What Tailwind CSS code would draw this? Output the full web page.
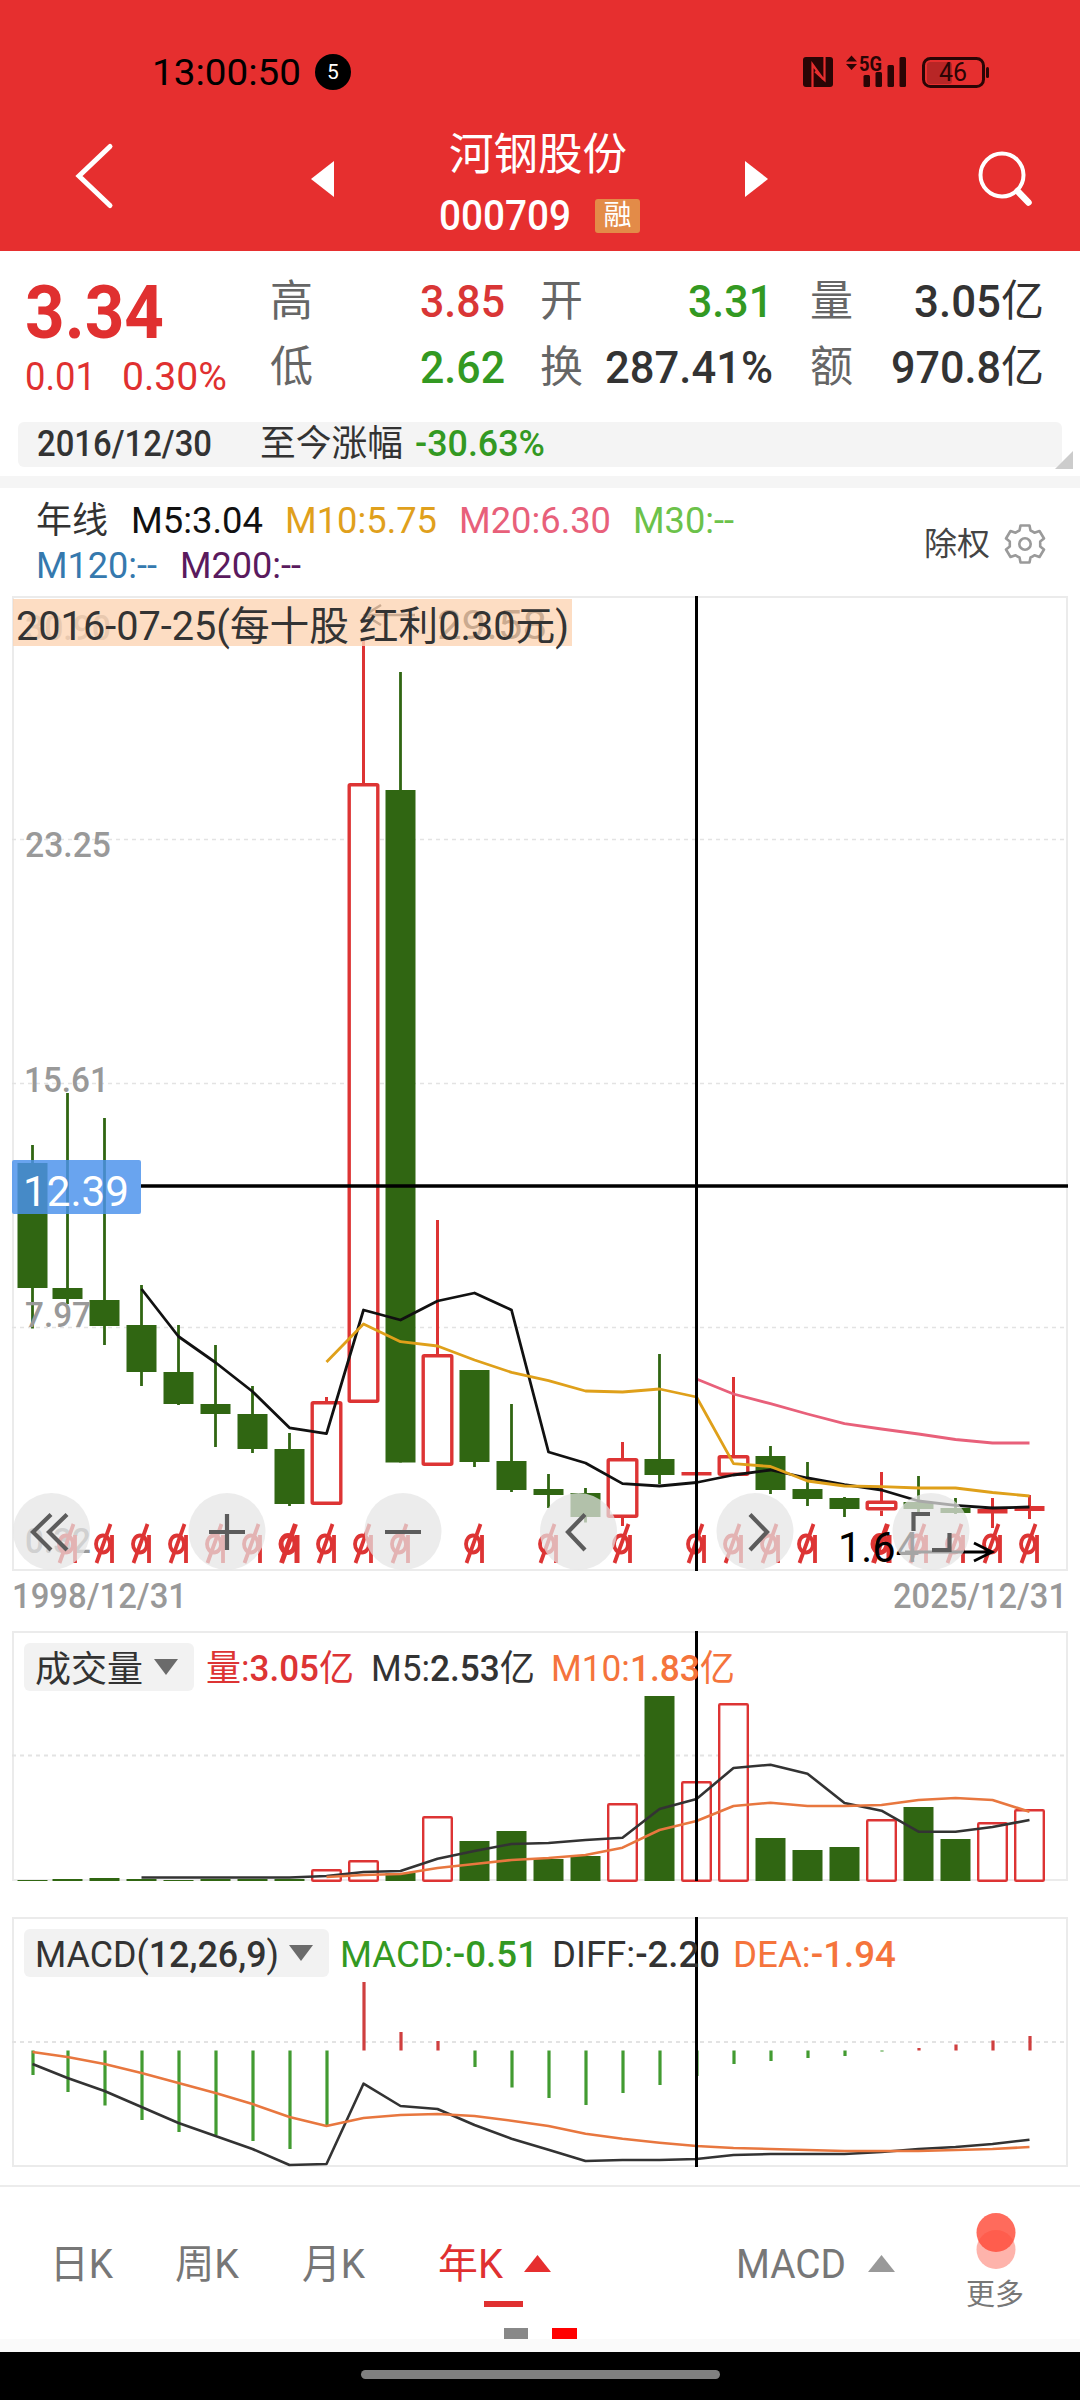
<!DOCTYPE html>
<html lang="zh-CN">
<head>
<meta charset="utf-8">
<title>河钢股份 000709</title>
<script src="https://cdn.jsdelivr.net/npm/@tailwindcss/browser@4"></script>
</head>
<body class="bg-white">
<div class="w-[1080px] h-[2400px] flex flex-col overflow-hidden bg-white font-[Roboto,'Noto_Sans_CJK_SC',sans-serif] text-[#333] whitespace-nowrap">

  <header class="h-[251px] shrink-0 bg-[#e62f2f] flex flex-col">
    <div class="mt-[54px] h-9 flex items-center text-black">
      <span class="ml-[152px] mt-[2px] text-[37px] leading-9" data-w="149">13:00:50</span>
      <span class="ml-[14px] size-9 rounded-full bg-black text-white text-[21px] leading-9 text-center">5</span>
      <svg class="ml-[439px] shrink-0" width="220" height="36" viewBox="790 54 220 36">
        <g fill="#2a0505">
          <rect x="803" y="57" width="30" height="30" rx="3"/>
          <path d="M812.500 87V64.500L823 79M824.500 57V80L815 71.500" fill="none" stroke="#e62f2f" stroke-width="2.200"/>
          <path d="M846 61.500l5.500-6 5.500 6zM846 64l5.500 6 5.500-6z"/>
          <rect x="863.500" y="75" width="6.500" height="12" rx="1.500"/>
          <rect x="875.500" y="72" width="6.500" height="15" rx="1.500"/>
          <rect x="887.500" y="65" width="6.500" height="22" rx="1.500"/>
          <rect x="899.500" y="57" width="6.500" height="30" rx="1.500"/>
          <text x="859" y="70.500" font-size="20" font-weight="700" textLength="23" lengthAdjust="spacingAndGlyphs">5G</text>
          <rect x="927" y="62" width="25" height="22" rx="3" fill="#b82626"/>
          <rect x="923.500" y="58.500" width="60" height="28" rx="7" fill="none" stroke="#2a0505" stroke-width="3"/>
          <rect x="986" y="67" width="3" height="11" rx="1.500"/>
          <text x="939" y="81" font-size="25" textLength="28" lengthAdjust="spacingAndGlyphs">46</text>
        </g>
      </svg>
    </div>
    <div class="flex-1 flex items-start">
      <svg class="ml-[74px] mt-[50px] shrink-0" width="42" height="72" viewBox="74 140 42 72" fill="none" stroke="#fff" stroke-width="5" stroke-linecap="round"><path d="M110 146.500L79 176l31 29.500"/></svg>
      <svg class="ml-[195px] mt-[71px] shrink-0" width="23" height="36" viewBox="0 0 23 36" fill="#fff"><path d="M23 0v36L0 18z"/></svg>
      <div class="ml-[105px] w-[204px] mt-[40px] text-white flex flex-col">
        <span class="ml-[10px] text-[44px] leading-[50px]" data-w="178">河钢股份</span>
        <div class="mt-[18px] h-9 flex items-center">
          <span class="text-[42px] leading-9 font-medium" data-w="132">000709</span>
          <span class="ml-[24px] w-[45px] h-[34px] rounded-[3px] bg-[#e38b48] text-[28px] leading-[33px] text-center">融</span>
        </div>
      </div>
      <svg class="ml-[102px] mt-[71px] shrink-0" width="23" height="36" viewBox="0 0 23 36" fill="#fff"><path d="M0 0v36l23-18z"/></svg>
      <svg class="ml-[208px] mt-[58px] shrink-0" width="60" height="62" viewBox="976 148 60 62" fill="none" stroke="#fff"><circle cx="1002" cy="175" r="21.500" stroke-width="4"/><path d="M1017.500 191l11 11.500" stroke-width="6.500" stroke-linecap="round"/></svg>
    </div>
  </header>

  <section class="h-[171px] shrink-0 flex text-[45px] leading-[66px] font-medium">
    <div class="w-[201px] ml-[25px] text-[#e03030] flex flex-col">
      <span class="mt-[25px] leading-[70px] text-[75px] font-bold" data-w="139">3.34</span>
      <div class="flex mt-[11px] leading-[40px] text-[39px] font-normal">
        <span data-w="71">0.01</span>
        <span class="ml-[26px]" data-w="105">0.30%</span>
      </div>
    </div>
    <div class="mt-[17px] ml-[44px] w-[235px] grid grid-rows-2 h-[132px]">
      <div class="flex justify-between"><span class="font-normal text-[43px] text-[#666]">高</span><span class="text-[#d93636]" data-w="85">3.85</span></div>
      <div class="flex justify-between"><span class="font-normal text-[43px] text-[#666]">低</span><span class="text-[#339922]" data-w="85">2.62</span></div>
    </div>
    <div class="mt-[17px] ml-[35px] w-[233px] grid grid-rows-2 h-[132px]">
      <div class="flex justify-between"><span class="font-normal text-[43px] text-[#666]">开</span><span class="text-[#339922]" data-w="85">3.31</span></div>
      <div class="flex justify-between"><span class="font-normal text-[43px] text-[#666]">换</span><span data-w="168">287.41%</span></div>
    </div>
    <div class="mt-[17px] ml-[37px] w-[234px] grid grid-rows-2 h-[132px]">
      <div class="flex justify-between"><span class="font-normal text-[43px] text-[#666]">量</span><div class="flex"><span data-w="87">3.05</span><span class="text-[43px] font-normal">亿</span></div></div>
      <div class="flex justify-between"><span class="font-normal text-[43px] text-[#666]">额</span><div class="flex"><span data-w="110">970.8</span><span class="text-[43px] font-normal">亿</span></div></div>
    </div>
  </section>

  <section class="h-[54px] shrink-0 pl-[18px] flex">
    <div class="w-[1044px] shrink-0 h-[45px] rounded-md bg-[#f4f4f4] flex items-center pl-[19px] text-[36px] leading-[44px] font-medium">
      <span data-w="175">2016/12/30</span>
      <span class="ml-[48px] font-normal" data-w="143">至今涨幅</span>
      <span class="ml-[12px] text-[#339922]" data-w="130">-30.63%</span>
    </div>
    <svg class="mt-[29px] -ml-[7px] shrink-0" width="18" height="18" viewBox="0 0 18 18"><path d="M18 0v18H0z" fill="#ccc"/></svg>
  </section>
  <div class="h-3 shrink-0 bg-[#f5f5f5]"></div>

  <section class="h-[102px] shrink-0 flex text-[36px] leading-[45px]">
    <div class="ml-[36px] mt-[11px] w-[890px]">
      <div class="flex">
        <span data-w="72">年线</span>
        <span class="ml-[23px] text-[#111]" data-w="132">M5:3.04</span>
        <span class="ml-[22px] text-[#e0a01c]" data-w="152">M10:5.75</span>
        <span class="ml-[22px] text-[#e8607a]" data-w="152">M20:6.30</span>
        <span class="ml-[22px] text-[#6cc24a]" data-w="101">M30:--</span>
      </div>
      <div class="flex">
        <span class="text-[#3579ae]" data-w="121">M120:--</span>
        <span class="ml-[23px] text-[#5a1a5e]" data-w="121">M200:--</span>
      </div>
    </div>
    <div class="mt-[34px] -ml-[2px] text-[32px] leading-[44px] w-[80px] text-[#444]"><span data-w="66">除权</span></div>
    <svg class="mt-[35px] shrink-0" width="42" height="42" viewBox="-21 -21 42 42" fill="none" stroke="#9a9a9a" stroke-width="2.600" stroke-linejoin="round">
      <path d="M-4.500-18.500H4.500L5.500-13.500Q8-12.500 9.500-11.200L14.500-13L19-5.500L15.200-2.500V2.500L19 5.500L14.500 13L9.500 11.200Q8 12.500 5.500 13.500L4.500 18.500H-4.500L-5.500 13.500Q-8 12.500-9.500 11.200L-14.500 13L-19 5.500L-15.200 2.500V-2.500L-19-5.500L-14.500-13L-9.500-11.200Q-8-12.500-5.500-13.500Z"/><circle r="5.700"/>
    </svg>
  </section>

  <svg id="price" class="shrink-0" width="1080" height="1030" viewBox="0 590 1080 1030"></svg>
  <svg id="volume" class="shrink-0" width="1080" height="280" viewBox="0 1620 1080 280"></svg>
  <svg id="macd" class="shrink-0" width="1080" height="285" viewBox="0 1900 1080 285"></svg>

  <nav class="h-[154px] shrink-0 border-t-2 border-[#ececec] flex text-[40px] leading-[50px] text-[#777]">
    <div class="ml-[50px] mt-[53px] w-[125px] flex h-[50px]"><span data-w="63">日K</span></div>
    <div class="mt-[53px] w-[127px] flex h-[50px]"><span data-w="64">周K</span></div>
    <div class="mt-[53px] w-[136px] flex h-[50px]"><span data-w="63">月K</span></div>
    <div class="w-[298px] mt-[53px] text-[#e03030]">
      <div class="flex items-center"><span data-w="65">年K</span><svg class="ml-[21px] -mt-[4px]" width="27" height="17" viewBox="0 0 27 17"><path d="M13.500 0L27 17H0z" fill="#e62f2f"/></svg></div>
      <div class="ml-[46px] mt-[11px] w-[39px] h-[6px] bg-[#e03030]"></div>
      <div class="ml-[66px] mt-[21px] flex"><i class="w-6 h-[11px] bg-[#888]"></i><i class="ml-[24px] w-[25px] h-[11px] bg-[#f00]"></i></div>
    </div>
    <div class="w-[230px] h-[50px] mt-[53px] flex items-center"><span data-w="110">MACD</span><svg class="ml-[22px] -mt-[4px]" width="27" height="17" viewBox="0 0 27 17"><path d="M13.500 0L27 17H0z" fill="#999"/></svg></div>
    <div class="mt-[24px]">
      <svg class="ml-[10px] block" width="42" height="60" viewBox="0 0 42 60"><circle cx="20" cy="38.500" r="19.500" fill="#feb3ab"/><circle cx="20" cy="21.500" r="19.500" fill="#ff4a38" fill-opacity=".82"/></svg>
      <div class="mt-[6px] text-[29px] leading-[36px]">更多</div>
    </div>
  </nav>
  <div class="h-[13px] shrink-0 bg-[#fafafa]"></div>
  <footer class="flex-1 bg-black flex justify-center pt-[18px]"><div class="w-[359px] h-[9px] rounded-full bg-[#808080]"></div></footer>
</div>

<script>
document.querySelectorAll('[data-w]').forEach(el => {
  const w = el.dataset.w;
  el.innerHTML = `<svg class="inline align-baseline overflow-visible h-[0.7em]" width="${w}"><text y="100%" fill="currentColor" textLength="${w}" lengthAdjust="spacingAndGlyphs">${el.textContent}</text></svg>`;
});

const GREEN = '#306612', RED = '#dd3434', INK = '#333', ORANGE = '#e8773f';
const X = i => i === 0 ? 32.5 : 30.5 + 37 * i;
const line = (x1, y1, x2, y2, c, w) => `<line x1="${x1}" y1="${y1}" x2="${x2}" y2="${y2}" stroke="${c}" stroke-width="${w}"/>`;
const rect = (x, y, w, h, c) => `<rect x="${x}" y="${y}" width="${w}" height="${h}" fill="${c}"/>`;
const hollow = (x, y, w, h, s) => `<rect x="${x + s / 2}" y="${y + s / 2}" width="${w - s}" height="${Math.max(h - s, .5)}" rx="1" fill="#fff" stroke="${RED}" stroke-width="${s}"/>`;
const poly = (start, ys, c, w = 2.8) => `<polyline fill="none" stroke="${c}" stroke-width="${w}" stroke-linejoin="round" points="${ys.map((y, k) => X(start + k) + ',' + y).join(' ')}"/>`;
const text = (x, y, s, size, w, c, weight = 400) => `<text x="${x}" y="${y}" font-size="${size}" font-weight="${weight}" fill="${c}" textLength="${w}" lengthAdjust="spacingAndGlyphs">${s}</text>`;
const num = s => `<tspan font-weight="500">${s}</tspan>`;
const frame = (y1, y2) => `<rect x="13" y="${y1}" width="1054" height="${y2 - y1}" fill="none" stroke="#ebebeb" stroke-width="2"/>`;
const dash = (y, w = 1.5) => `<line x1="12" y1="${y}" x2="1066" y2="${y}" stroke="#e3e3e3" stroke-width="${w}" stroke-dasharray="4 4"/>`;

// kind, high, body top, body bottom, low
const candles = [
  ['g',1145,1163,1288,1328.5],['g',1093,1288,1299,1304],['g',1118,1300,1326,1345],['g',1285,1325,1372,1386],
  ['g',1325,1372,1404,1405],['g',1345,1404,1414,1447],['g',1386,1414,1449,1453],['g',1433,1449,1504,1506],
  ['r',1397,1401,1505,1505],['r',640,783,1403,1403],['g',672,790,1462.5,1462.5],['r',1220,1354,1466,1466],
  ['g',1370,1370,1462,1467],['g',1404,1461,1490,1492],['g',1474,1489,1495,1508],['g',1488,1493,1517,1522.5],
  ['r',1442,1458,1518,1526],['g',1354,1459,1475,1484],['x',1458,1472,1475.5,1497],['r',1377,1455,1476,1476],
  ['g',1446,1456,1490,1494],['g',1462,1489,1499,1506],['g',1497,1498,1509,1517],['r',1472,1500.5,1510.5,1516],
  ['g',1476,1502,1509,1512.5],['g',1498,1508,1513,1514],['x',1498,1509,1513.5,1528],['x',1495,1506,1511,1519]];
let p = frame(597, 1570) + dash(839.5) + dash(1083.5) + dash(1327.5);
candles.forEach(([k, h, t, b, l], i) => {
  const x = X(i);
  p += line(x, h, x, k === 'r' ? t + 1 : l, k === 'g' ? GREEN : RED, k === 'g' ? 2.8 : 3);
  if (k === 'r') { if (l > b) p += line(x, b, x, l, RED, 3); p += hollow(x - 16, t, 32, b - t, 3.4); }
  else p += rect(x - 15, t, 30, b - t, k === 'g' ? GREEN : RED);
});
p += poly(3, [1289,1336.5,1362.5,1391.5,1427.8,1433.7,1310,1320,1301,1293,1310,1452,1463,1483.6,1486,1482.5,1475,1470,1478,1484.6,1490,1501,1505.3,1508,1507], '#111');
p += poly(8, [1362,1324,1341.7,1346,1360,1372.4,1380.6,1391,1392,1389,1397,1463.6,1466.5,1481,1486,1486.7,1488,1488,1492.5,1496], '#dfa01a');
p += poly(18, [1379,1394,1403.7,1414,1423.7,1429,1434,1439.5,1443,1443], '#e8607a');
p += text(25, 857, '23.25', 35.5, 86, '#999', 500) + text(24, 1092, '15.61', 35.5, 85, '#999', 500)
   + text(25, 1327, '7.97', 35.5, 66, '#999', 500) + text(25, 1553, '0.32', 35.5, 66, '#999', 500)
   + text(25, 640, '30.90', 35.5, 86, '#999', 500);
p += text(437, 639, '29.58', 40, 110, '#000') + '<path d="M415 615H365M381 605l-16 10 16 10" fill="none" stroke="#000" stroke-width="2.600"/>';
[1,2,3,4,5,6,7,8,9,10,12,14,16,18,19,20,21,23,24,25,26,27].forEach(i => {
  const x = X(i), w = i === 7 || i === 23 ? 5 : 3.8;
  p += `<g fill="none" stroke="${RED}" stroke-width="${w}"><ellipse cx="${x - 1.5}" cy="1544" rx="7" ry="8.500"/><path d="M${x + 7.5} 1535V1563M${x - 8} 1563L${x + 6} 1524"/></g>`;
});
p += text(838, 1562, '1.64', 42, 81, '#000') + '<path d="M905 1552H992M974 1543l18 9-18 9" fill="none" stroke="#000" stroke-width="2.800"/>';
const btn = (cx, d) => `<circle cx="${cx}" cy="1531.500" r="38.500" fill="#e5e5e5" fill-opacity=".72"/><path d="${d}" fill="none" stroke="#5c5c5c" stroke-width="4.200"/>`;
p += btn(51.5, 'M51 1514.500L33 1532l18 18M67 1514.500L49 1532l18 18') + btn(227, 'M209 1532H245M227 1514V1550') + btn(403, 'M385 1532H421')
   + btn(578.5, 'M585 1514.500L568 1532l17 18') + btn(755, 'M750 1514.500L767 1532l-17 18') + btn(931, 'M930 1514H913.500V1531M949.500 1533V1550H932');
p += rect(13, 599, 559, 47, 'rgba(253,212,180,.8)') + text(16, 639.5, '2016-07-25(每十股 红利0.30元)', 40, 553, '#333');
p += line(696.5, 596, 696.5, 1571, '#000', 3) + line(141, 1186, 1068, 1186, '#000', 3.5);
p += '<rect x="12" y="1160" width="129" height="54" rx="2" fill="rgb(74,146,236)" fill-opacity=".83"/>' + text(23, 1206, '12.39', 43, 106, '#fff');
p += text(12, 1608, '1998/12/31', 35.5, 175, '#999', 500) + text(893, 1608, '2025/12/31', 35.5, 174, '#999', 500);
document.getElementById('price').innerHTML = p;

// Volume pane
const vols = ['g1880','g1879','g1878','g1879','g1880','g1879','g1879','g1879','r1869','r1860','g1873','r1816','g1841','g1831','g1859','g1856','r1803','g1696','r1781','r1703','g1838','g1850','g1847','r1819','g1807','g1839','r1822','r1809'];
let v = frame(1632, 1880) + dash(1755.5, 2);
vols.forEach((s, i) => { const y = +s.slice(1); v += s[0] === 'g' ? rect(X(i) - 15, y, 30, 1881 - y, GREEN) : hollow(X(i) - 15.5, y, 31, 1882 - y, 2.4); });
v += poly(3, [1877.5,1877.5,1877.5,1877.5,1877.5,1876,1872,1871,1858.7,1851,1844,1843,1840,1837.7,1809,1799,1768,1764.7,1773.7,1803,1810.7,1831.7,1831.7,1827,1820], INK, 2.6);
v += poly(8, [1877,1875,1874,1868,1864,1860,1858,1855,1847.7,1830,1821,1806,1802.7,1806,1806,1805,1800,1798,1800,1811.7], ORANGE, 2.6);
v += line(696.5, 1631, 696.5, 1881, '#000', 3);
v += '<rect x="24" y="1643" width="170" height="48" rx="6" fill="#f2f2f2"/><path d="M154 1659h24l-12 16z" fill="#6b6b6b"/>';
v += text(35, 1682, '成交量', 36, 108, INK) + text(206, 1680.5, '量:' + num('3.05') + '亿', 36, 148, RED) + text(371, 1680.5, 'M5:' + num('2.53') + '亿', 36, 164, INK) + text(551, 1680.5, 'M10:' + num('1.83') + '亿', 36, 184, '#f5743c');
document.getElementById('volume').innerHTML = v;

// MACD pane
const bars = [2075,2092,2105.5,2120,2132,2135,2141,2149,2126,1982,2032,2041,2067,2087.5,2098,2105,2093,2085,2076,2064,2061,2058,2056,2051.5,2048,2044.5,2040.5,2036];
let m = frame(1918, 2166) + dash(2042, 2);
bars.forEach((y, i) => { m += line(X(i) + .5, 2050.5, X(i) + .5, y, y > 2050.5 ? '#429b31' : '#cf3f3f', 3.2); });
m += poly(0, [2064,2078,2091,2107,2123,2136,2149,2165,2164,2083.7,2106,2109,2125,2138.7,2149.7,2161,2160,2160,2159,2155,2154,2154,2154,2152,2149,2147,2144,2139.7], INK, 2.6);
m += poly(0, [2052,2057,2064,2073,2083,2093,2104,2117,2126,2118,2115,2114,2116,2120.7,2126,2133.7,2138.7,2142.7,2146,2148,2149,2150,2151,2151,2151,2150,2149,2147], ORANGE, 2.6);
m += line(696.5, 1917, 696.5, 2167, '#000', 3);
m += '<rect x="24" y="1929" width="305" height="48" rx="6" fill="#f2f2f2"/><path d="M289 1945h24l-12 16z" fill="#6b6b6b"/>';
m += text(35, 1967, 'MACD(' + num('12,26,9') + ')', 36, 244, INK) + text(340, 1966.5, 'MACD:' + num('-0.51'), 36, 198, '#339922') + text(552, 1966.5, 'DIFF:' + num('-2.20'), 36, 168, INK) + text(733, 1966.5, 'DEA:' + num('-1.94'), 36, 163, '#f5743c');
document.getElementById('macd').innerHTML = m;
</script>
</body>
</html>
